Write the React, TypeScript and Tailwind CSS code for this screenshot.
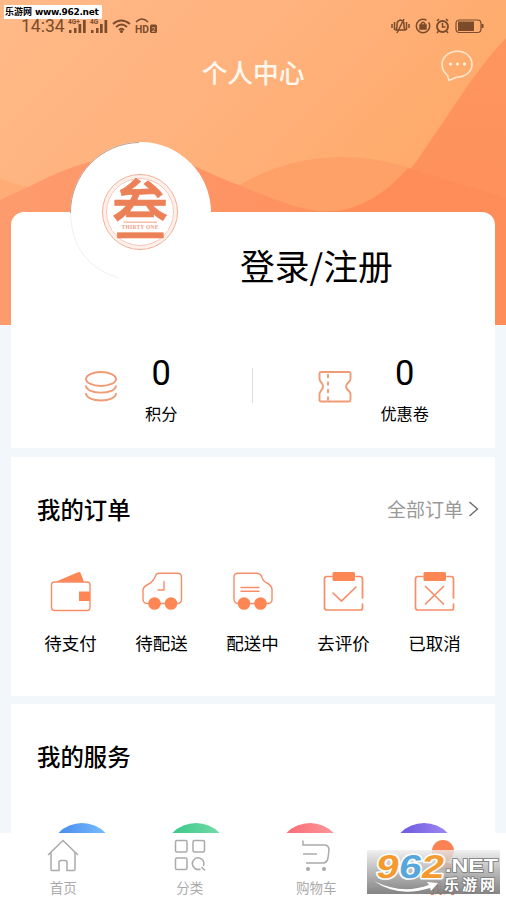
import type { ReactNode } from 'react';

type OrderItem = {
  label: string;
  icon: ReactNode;
};

const services = [
  { id: 'blue', from: '#4a90f0', to: '#74b8fb' },
  { id: 'green', from: '#3fca8b', to: '#6ed9a4' },
  { id: 'red', from: '#fb6f78', to: '#fc9396' },
  { id: 'purple', from: '#705ce0', to: '#9a83f0' },
];

const orders: OrderItem[] = [
  {
    label: '待支付',
    icon: (
      <>
        <path d="M5 11 28 1.3q2-.8 2.8 1.2L34 11Z" fill="#fd8655" stroke="none" />
        <rect x="1.5" y="11" width="38.5" height="28.5" rx="3" />
        <path d="M29 20.5h11v9.500h-11z" fill="#fd8655" stroke="none" />
      </>
    ),
  },
  {
    label: '待配送',
    icon: (
      <>
        <path d="M6 32.500q-4-.5-4-4.500v-8q0-4 4-6 6-3 8-8 1-3.700 4-3.700h18.500q4 0 4 4V29q0 3-4 3.500ZM17 32.500h8" />
        <path d="M23 10.500v8.500h-6" />
        <circle cx="13.500" cy="32.500" r="6.300" fill="#fd8655" stroke="none" />
        <circle cx="30" cy="32.500" r="6.300" fill="#fd8655" stroke="none" />
      </>
    ),
  },
  {
    label: '配送中',
    icon: (
      <>
        <path d="M6 32.500q-4-.5-4-4.500V6.300q0-4 4-4h18q5 0 6 4 1 4 5 5.700 5 2.500 5 7V29q0 3-4 3.500Z" />
        <path d="M9 16.500h18M9 20.300h18" />
        <circle cx="12" cy="32.500" r="6.300" fill="#fd8655" stroke="none" />
        <circle cx="28.500" cy="32.500" r="6.300" fill="#fd8655" stroke="none" />
      </>
    ),
  },
  {
    label: '去评价',
    icon: (
      <>
        <path d="M9 5.500H4q-2.500 0-2.500 2.500v28.500q0 2.500 2.500 2.500h33.500q2 0 2-2v-4M33 5.500h4q2.500 0 2.500 2.500v19" strokeWidth="1.700" />
        <rect x="9.500" y="1" width="22.500" height="9" rx="1.500" fill="#fd8655" stroke="none" />
        <path d="m10 22 8.500 8L33 16" strokeWidth="1.700" />
      </>
    ),
  },
  {
    label: '已取消',
    icon: (
      <>
        <path d="M9 5.500H4q-2.500 0-2.500 2.500v28.500q0 2.500 2.500 2.500h33.500q2 0 2-2v-4M33 5.500h4q2.500 0 2.500 2.500v19" strokeWidth="1.700" />
        <rect x="9.500" y="1" width="22.500" height="9" rx="1.500" fill="#fd8655" stroke="none" />
        <path d="m11.500 15.500 18 17.500M29.500 15.500 11.500 33" strokeWidth="1.700" />
      </>
    ),
  },
];

function HeaderBackground() {
  return (
    <svg className="absolute left-0 top-0" width="506" height="325" viewBox="0 0 506 325" aria-hidden="true">
      <defs>
        <linearGradient id="sky" x1="0" y1="0" x2="1" y2="0.600">
          <stop offset="0" stopColor="#ffb988" />
          <stop offset="0.500" stopColor="#ffb17b" />
          <stop offset="1" stopColor="#fea763" />
        </linearGradient>
        <linearGradient id="hill" x1="0" y1="0" x2="1" y2="0">
          <stop offset="0" stopColor="#fe9b6d" />
          <stop offset="1" stopColor="#fe8b58" />
        </linearGradient>
        <linearGradient id="slope" x1="0" y1="0" x2="0" y2="1">
          <stop offset="0" stopColor="#fe955f" />
          <stop offset="1" stopColor="#fe905c" />
        </linearGradient>
      </defs>
      <rect width="506" height="325" fill="url(#sky)" />
      <path d="M0 179q16 6 40 10v20H0Z" fill="#ffac76" />
      <path d="M236 187q50-30 107-30 35 0 80 15v60H236Z" fill="#fea168" />
      <path d="M0 200C40 182 60 170 83 164c40-14 85-11 120 6 17 8 34 14 50 21 22 8 44 18 67 20h186v114H0Z" fill="url(#hill)" />
      <path d="M506 38Q483 62 458 100L416 162Q390 198 344 213l162 20Z" fill="url(#slope)" />
      <path d="M408 168q50 15 98 30v127H330V212q44-4 78-44Z" fill="#fe8d5a" />
    </svg>
  );
}

function StatusBar() {
  return (
    <div className="flex h-[38px] items-start justify-between pl-[21px] pr-[21px] pt-[16px] text-[#7b4b2b]">
      <div className="flex items-center">
        <span className="w-[43px] whitespace-nowrap font-[Roboto] text-[17.500px] leading-[21px]">14:34</span>
        <svg className="ml-[4px]" width="92" height="20" viewBox="0 0 92 20" fill="currentColor">
          <text x="0" y="7" fontSize="6.500" fontWeight="700" fontFamily="Roboto">4G+</text>
          <path d="M1 13h2.500v3H1ZM6 11h2.500v5H6ZM10.500 7h2.700v9h-2.700ZM15 3h2.700v13H15Z" />
          <text x="22" y="7" fontSize="6.500" fontWeight="700" fontFamily="Roboto">4G</text>
          <path d="M23 13h2.500v3H23ZM28 11h2.500v5H28ZM32 7h2.700v9H32ZM36.500 3h2.700v13h-2.700Z" />
          <g fill="none" stroke="currentColor" strokeWidth="1.800">
            <path d="M45 7q8-7 17 0M48 10q5.500-5 11 0M51 13q2.500-2.500 5 0" />
            <path d="M68 5q6-6 12 0" strokeWidth="1.600" />
          </g>
          <circle cx="53.500" cy="14.500" r="1.600" />
          <text x="67" y="16" fontSize="11" fontWeight="700" fontFamily="Roboto" textLength="14" lengthAdjust="spacingAndGlyphs">HD</text>
          <rect x="82" y="7.500" width="7" height="8.500" rx="1.500" />
          <text x="83.500" y="14.500" fontSize="7" fill="#ffb584" fontFamily="Roboto">2</text>
        </svg>
      </div>
      <svg width="95" height="20" viewBox="0 0 95 20" fill="none" stroke="currentColor" strokeWidth="1.500">
        <path d="M2 8v4M4.500 6v8M16.500 6v8M19 8v4M6 14h9l-1-3V8q0-3-3.500-4Q7 5 7 8v3ZM14 3 7 17" />
        <circle cx="33" cy="10" r="6.700" strokeDasharray="35 3" />
        <path d="M30 9h6v4h-6Z" fill="currentColor" />
        <path d="M31.300 9V7.500q1.700-2.500 3.400 0V9" />
        <circle cx="52.500" cy="10.500" r="5.500" strokeWidth="1.900" />
        <path d="M52.500 7v4h3M47 5l2-2M58 5l-2-2M48.500 15l-1.500 2M56.500 15l1.500 2" />
        <rect x="66" y="4" width="25" height="12.500" rx="3.500" strokeWidth="1.200" />
        <path d="M68 5.500h16v9.500H68Z" fill="currentColor" stroke="none" />
        <path d="M92.500 8v4" strokeWidth="2" />
      </svg>
    </div>
  );
}

function Avatar() {
  return (
    <div className="absolute left-[59px] top-[-70px] h-[141px] w-[141px] rounded-full bg-white">
      <svg width="141" height="141" viewBox="0 0 141 141" fill="none">
        <path d="M69 .5A70 70 0 0 0 .5 71" stroke="#8d6250" strokeWidth=".6" />
        <path d="M.5 71q1 50 48 65" stroke="#e8e8e8" strokeWidth=".7" />
        <circle cx="70" cy="70" r="35.500" stroke="#fdf0ea" strokeWidth="3" />
        <circle cx="70" cy="70" r="37.500" stroke="#f3ae97" strokeWidth="1" />
        <circle cx="70" cy="70" r="33.500" stroke="#f6c0ae" strokeWidth=".9" />
        {/* seal character, its middle bar gives way to the romanised name */}
        <text
          transform="translate(70 91.500) scale(1 1.160)"
          textAnchor="middle"
          fontSize="56"
          fontWeight="500"
          fontFamily="Noto Sans CJK SC"
          fill="#ec8158"
          stroke="#ec8158"
          strokeWidth=".6"
        >
          叁
        </text>
        <path d="M42 80.500h56v8.500H42Z" fill="#fff" />
        <text x="70" y="87" textAnchor="middle" textLength="37" fontSize="5.500" fontWeight="700" fontFamily="Liberation Serif" fill="#eda085">THIRTY ONE</text>
      </svg>
    </div>
  );
}

function Stat({ icon, label }: { icon: ReactNode; label: string }) {
  return (
    <>
      <svg className="mt-[15px] shrink-0" width="34" height="34" viewBox="0 0 34 34" fill="none" stroke="#f09a76" strokeWidth="1.900">
        {icon}
      </svg>
      <div className="flex flex-col items-center text-black">
        <span className="font-[Roboto] text-[34.500px] leading-[36px]">0</span>
        <span className="mt-[11px] text-[16.200px] leading-[22px]">{label}</span>
      </div>
    </>
  );
}

function TabItem({ label, children }: { label: string; children: ReactNode }) {
  return (
    <div className="flex flex-1 flex-col items-center pt-[5px] text-[#aaa]">
      <svg width="34" height="34" viewBox="0 0 34 34" fill="none" stroke="currentColor" strokeWidth="1.500">
        {children}
      </svg>
      <span className="mt-[5px] text-[13.500px] leading-[20px]">{label}</span>
    </div>
  );
}

function SiteBadge() {
  return (
    <div className="absolute left-[367px] top-[850px] h-[44px] w-[133px] bg-linear-to-b from-[#ededed]/80 to-[#777]/90">
      <svg width="133" height="44" viewBox="0 0 133 44">
        <text
          x="0"
          y="0"
          transform="translate(8 28) skewX(-9)"
          textLength="68"
          lengthAdjust="spacingAndGlyphs"
          fontFamily="Liberation Sans"
          fontWeight="700"
          fontSize="33"
          stroke="#fff"
          strokeWidth="3"
          strokeLinejoin="round"
          paintOrder="stroke"
        >
          <tspan fill="#f49a2f">9</tspan>
          <tspan fill="#58a7dc">6</tspan>
          <tspan fill="#f49a2f">2</tspan>
        </text>
        <path d="M7 31q28 14 55 4l-2-3 11 1-7 8-1-3Q31 48 7 31Z" fill="#fff" />
        <g fill="#fff" stroke="#777" strokeWidth="1.500" paintOrder="stroke" fontWeight="700">
          <text x="78" y="22" fontSize="19" textLength="53" lengthAdjust="spacingAndGlyphs" fontFamily="Liberation Sans">.NET</text>
          <text x="77" y="40" fontSize="15" textLength="51" fontFamily="Noto Sans CJK SC">乐游网</text>
        </g>
      </svg>
    </div>
  );
}

export default function App() {
  return (
    <div className="relative flex h-[900px] w-[506px] flex-col overflow-hidden bg-[#f2f7fb] font-['Noto_Sans_CJK_SC',sans-serif]">
      <HeaderBackground />
      <div className="relative flex min-h-0 flex-1 flex-col">
        <StatusBar />
        <header className="grid h-[174px] grid-cols-[1fr_auto_1fr] items-start pt-[12px] text-[#fff8ee]">
          <span />
          <h1 className="pt-[3px] text-[25.700px] font-medium leading-[37px]">个人中心</h1>
          <svg className="mr-[32px] justify-self-end" width="34" height="34" viewBox="0 0 34 34" fill="none" stroke="#ffe6cc" strokeWidth="1.600">
            <path d="M7.500 25.500Q2 20.500 2 14.500C2 7 9 1.200 17.500 1.200S32 7 32 14.500 25 27 17 27l-8 3.500Z" />
            <g fill="#fff3e2" stroke="none">
              <circle cx="10.500" cy="14" r="1.600" />
              <circle cx="17.500" cy="14" r="1.600" />
              <circle cx="24.500" cy="14" r="1.600" />
            </g>
          </svg>
        </header>

        <main className="mx-[11px] flex min-h-0 flex-1 flex-col overflow-visible">
          <section className="relative h-[236px] shrink-0 rounded-t-[13px] bg-white">
            <Avatar />
            <p className="pl-[229px] pt-[29px] text-[34.800px] leading-[48px] text-black">登录/注册</p>
            <div className="flex items-start pl-[73px] pt-[66px]">
              <div className="flex gap-[27px]">
                <Stat
                  label="积分"
                  icon={
                    <>
                      <ellipse cx="17" cy="9" rx="15" ry="7" />
                      <path d="M2 15.500c0 9.500 30 9.500 30 0M2 23c0 10 30 10 30 0" />
                    </>
                  }
                />
              </div>
              <div className="ml-[75px] mt-[13px] h-[35px] w-px bg-[#dedede]" />
              <div className="ml-[65px] flex gap-[28px]">
                <Stat
                  label="优惠卷"
                  icon={
                    <>
                      <path d="M3 2h28q1.500 0 1.500 1.500V9c0 3-4.500 4-4.500 7.500s4.500 4.500 4.500 7.500v6q0 1.500-1.500 1.500H3q-1.500 0-1.500-1.500v-6c0-3 3.500-4 3.500-7.500S1.500 12 1.500 9V3.500Q1.500 2 3 2Z" />
                      <path d="M10 4v27" strokeDasharray="4 3.500" />
                    </>
                  }
                />
              </div>
            </div>
          </section>

          <section className="mt-[9px] h-[239px] shrink-0 bg-white">
            <div className="flex items-center justify-between pl-[26px] pr-[16px] pt-[35px]">
              <h2 className="text-[23.400px] font-medium leading-[34px] text-black">我的订单</h2>
              <div className="flex items-center gap-[5px] text-[19px] leading-[28px] text-[#999]">
                全部订单
                <svg width="11" height="18" viewBox="0 0 11 18" fill="none" stroke="#666" strokeWidth="1.300">
                  <path d="m1.500 2 8 7-8 7" />
                </svg>
              </div>
            </div>
            <div className="grid grid-cols-5 pl-[14px] pr-[15px] pt-[45px]">
              {orders.map((order) => (
                <div key={order.label} className="flex flex-col items-center">
                  <svg width="42" height="42" viewBox="0 0 42 42" fill="none" stroke="#f78e68" strokeWidth="1.400" strokeLinecap="round">
                    {order.icon}
                  </svg>
                  <span className="mt-[17px] text-[17.500px] leading-[26px] text-black">{order.label}</span>
                </div>
              ))}
            </div>
          </section>

          <section className="mt-[8px] h-[129px] shrink-0 overflow-hidden bg-white">
            <h2 className="pl-[26px] pt-[35px] text-[23.400px] font-medium leading-[34px] text-black">我的服务</h2>
            <div className="flex justify-between pl-[38px] pr-[38px] pt-[50px]">
              {services.map((service) => (
                <svg key={service.id} width="66" height="66" viewBox="0 0 66 66">
                  <linearGradient id={service.id} x1="0" y1="0" x2="1" y2="0">
                    <stop offset="0.200" stopColor={service.from} />
                    <stop offset="0.800" stopColor={service.to} />
                  </linearGradient>
                  <circle cx="33" cy="33" r="33" fill={`url(#${service.id})`} />
                </svg>
              ))}
            </div>
          </section>
        </main>
      </div>

      <nav className="relative flex h-[67px] shrink-0 bg-white">
        <TabItem label="首页">
          <path d="M2 17 17 2.500 32 17M5 14v17.500q0 1 1 1h7v-8q0-2 2-2h4q2 0 2 2v8h7q1 0 1-1V14" />
        </TabItem>
        <TabItem label="分类">
          <rect x="2.500" y="2.500" width="11.500" height="11.500" rx="1.500" />
          <rect x="20" y="2.500" width="11.500" height="11.500" rx="1.500" />
          <rect x="2.500" y="20" width="11.500" height="11.500" rx="1.500" />
          <path d="M27.500 31a5.800 5.800 0 1 1 3-3M28.500 29l3.500 3.500" />
        </TabItem>
        <TabItem label="购物车">
          <path d="M4 2.500V7h21q5 0 5 5l-1 8q-1 5-5 5H7M4 16h14" />
          <circle cx="9" cy="31" r="1.300" fill="currentColor" />
          <circle cx="25" cy="31" r="1.300" fill="currentColor" />
        </TabItem>
        <div className="flex flex-1 flex-col items-center pt-[5px] text-[#e4724f]">
          <svg width="34" height="34" viewBox="0 0 34 34">
            <circle cx="17" cy="13" r="11" fill="#fb8255" />
            <path d="M5 32q2-8 12-8t12 8Z" fill="#fb8255" />
          </svg>
          <span className="mt-[5px] text-[13.500px] leading-[20px]">我的</span>
        </div>
      </nav>
      <SiteBadge />
      <div className="absolute left-[4px] top-[5px] flex h-[14px] w-[98px] items-center gap-[3px] whitespace-nowrap bg-white pl-px text-[9px] font-bold leading-[14px] text-black">
        <span>乐游网</span>
        <span className="font-['DejaVu_Sans'] text-[9px] tracking-[-0.300px]">www.962.net</span>
      </div>
    </div>
  );
}
